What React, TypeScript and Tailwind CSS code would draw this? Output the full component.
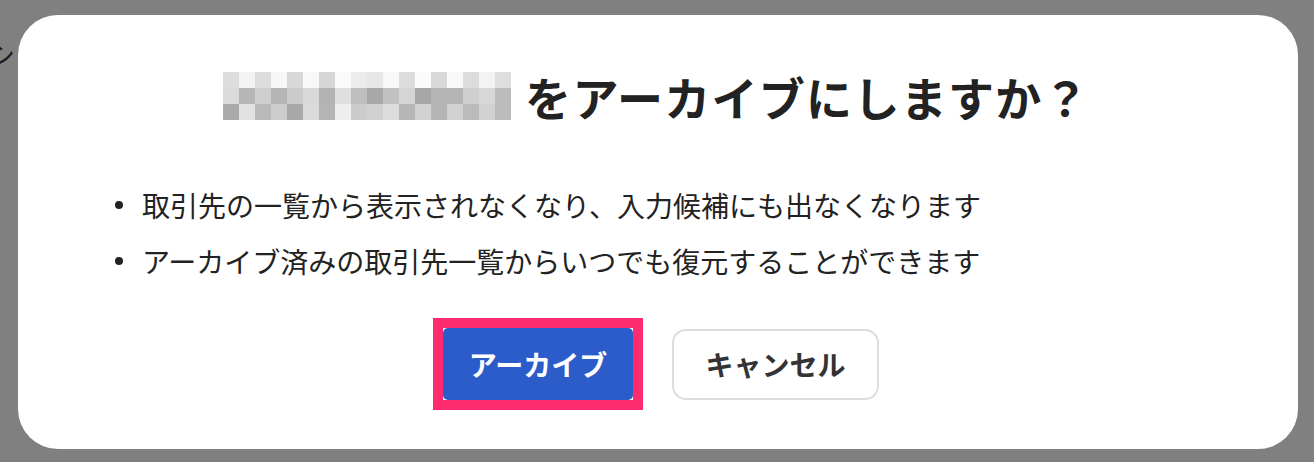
import React from "react"

const MOSAIC: string[][] = [
  ["#dddddd", "#f3f3f3", "#dcdcdc", "#f7f7f7", "#d8d8d8", "#f8f8f8", "#d6d6d6", "#fafafa", "#ececec", "#e7e7e7", "#f8f8f8", "#dcdcdc", "#fbfbfb", "#d9d9d9", "#f9f9f9", "#dcdcdc", "#f3f3f3", "#dedede"],
  ["#dadada", "#b6b6b6", "#cfcfcf", "#b5b5b5", "#cbcbcb", "#d9d9d9", "#b3b3b3", "#dfdfdf", "#bfbfbf", "#a8a8a8", "#c1c1c1", "#d5d5d5", "#a6a6a6", "#b5b5b5", "#b4b4b4", "#cfcfcf", "#d7d7d7", "#bcbcbc"],
  ["#aaaaaa", "#e2e2e2", "#b9b9b9", "#cdcdcd", "#a8a8a8", "#dbdbdb", "#b5b5b5", "#eeeeee", "#cccccc", "#d1d1d1", "#dcdcdc", "#b6b6b6", "#d2d2d2", "#b5b5b5", "#d2d2d2", "#bbbbbb", "#d2d2d2", "#bbbbbb"],
]

const NOTES = [
  "取引先の一覧から表示されなくなり、入力候補にも出なくなります",
  "アーカイブ済みの取引先一覧からいつでも復元することができます",
]

function Mosaic() {
  // 伏せ字になった取引先名
  return (
    <div className="flex flex-col shrink-0">
      {MOSAIC.map((row, i) => (
        <div key={i} className="flex">
          {row.map((c, j) => (
            <div key={j} className="w-4 h-4" style={{ backgroundColor: c }} />
          ))}
        </div>
      ))}
    </div>
  )
}

export default function App() {
  return (
    <div
      className="relative h-[462px] w-full overflow-hidden bg-[#808080] text-[#222222]"
      style={{ fontFamily: '"Noto Sans CJK JP", "Noto Sans", sans-serif' }}
    >
      {/* 背景ページ（オーバーレイの下） */}
      <span className="absolute left-[-11px] top-[34px] text-[26px] text-[#1c1c1c]">シ</span>

      <div className="absolute left-[18px] top-[15px] w-[1280px] h-[434px] rounded-[40px] bg-white">
        <div className="flex items-center justify-center gap-[14px] pt-[57px] pr-[3px]">
          <Mosaic />
          <h2 className="text-[46px] leading-[48px] tracking-[1.3px] font-bold text-[#222222] whitespace-nowrap">
            をアーカイブにしますか？
          </h2>
        </div>

        <ul className="mt-[57px] pl-[97px]">
          {NOTES.map((n) => (
            <li key={n} className="flex items-center gap-[19px] h-[56px] text-[28px] text-[#222222]">
              <span className="w-2 h-2 rounded-full bg-[#222222] shrink-0" />
              {n}
            </li>
          ))}
        </ul>

        <div className="flex items-center justify-center gap-[39px] mt-[39px] pl-[6px]">
          <div className="bg-white outline-[10px] outline-solid outline-[#fe2c6e]">
            <button className="w-[190px] h-[72px] rounded-[5px] bg-[#2b5cc9] text-white text-[28px] font-bold">
              アーカイブ
            </button>
          </div>
          <button className="w-[207px] h-[71px] rounded-[14px] border-2 border-[#dddddd] bg-white text-[#333333] text-[28px] font-bold">
            キャンセル
          </button>
        </div>
      </div>
    </div>
  )
}
